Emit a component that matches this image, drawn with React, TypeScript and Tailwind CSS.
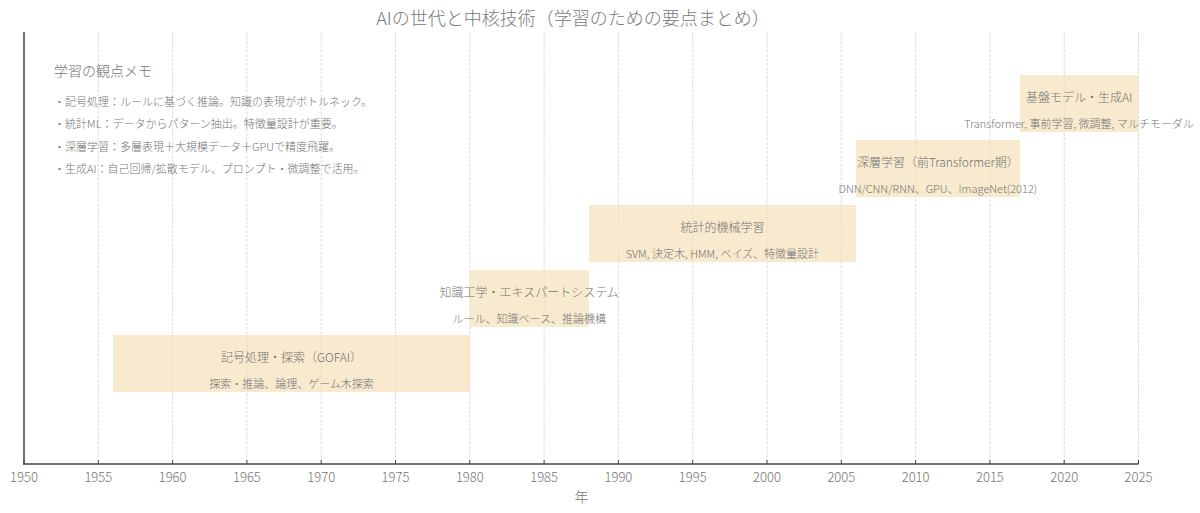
import React from "react";

const PX = 14.86; // pixels per year
const lx = (year: number) => (year - 1950) * PX;

type Era = { start: number; end: number; title: string; sub: string };

const eras: Era[] = [
  { start: 1956, end: 1980, title: "記号処理・探索（GOFAI）", sub: "探索・推論、論理、ゲーム木探索" },
  { start: 1980, end: 1988, title: "知識工学・エキスパートシステム", sub: "ルール、知識ベース、推論機構" },
  { start: 1988, end: 2006, title: "統計的機械学習", sub: "SVM, 決定木, HMM, ベイズ、特徴量設計" },
  { start: 2006, end: 2017, title: "深層学習（前Transformer期）", sub: "DNN/CNN/RNN、GPU、ImageNet(2012)" },
  { start: 2017, end: 2025, title: "基盤モデル・生成AI", sub: "Transformer, 事前学習, 微調整, マルチモーダル" },
];

const notes = [
  "・記号処理：ルールに基づく推論。知識の表現がボトルネック。",
  "・統計ML：データからパターン抽出。特徴量設計が重要。",
  "・深層学習：多層表現＋大規模データ＋GPUで精度飛躍。",
  "・生成AI：自己回帰/拡散モデル、プロンプト・微調整で活用。",
];

const ticks = Array.from({ length: 16 }, (_, i) => 1950 + i * 5);

export default function App() {
  return (
    <div className="w-[1200px] h-[513px] bg-white overflow-hidden flex flex-col font-['Noto_Sans_CJK_JP','Noto_Sans',sans-serif] font-light text-[#747474]">
      {/* Title */}
      <div className="h-[32px] w-[1146px] flex items-center justify-center pt-[2px]">
        <span className="text-[18px] leading-none text-[#7a7a7a]">
          AIの世代と中核技術（学習のための要点まとめ）
        </span>
      </div>

      {/* Plot area */}
      <div className="relative ml-[24px] w-[1115px] h-[432px]">
        <svg className="absolute inset-0 overflow-visible" width="1115" height="432">
          {ticks.slice(1).map((t) => (
            <line
              key={t}
              x1={lx(t)}
              x2={lx(t)}
              y1={0}
              y2={432}
              stroke="#d2d2d2"
              strokeWidth={0.8}
              strokeDasharray="3 1.4"
            />
          ))}
        </svg>

        {eras.map((e, i) => {
          const top = 303 - 65 * i;
          const center = top + 28.5;
          const cx = (lx(e.start) + lx(e.end)) / 2;
          return (
            <React.Fragment key={e.title}>
              <div
                className="absolute h-[57px] bg-[#f5deb3]/65"
                style={{ left: lx(e.start), width: lx(e.end) - lx(e.start), top }}
              />
              <div
                className="absolute -translate-x-1/2 -translate-y-1/2 whitespace-nowrap text-[12px] leading-none text-[#747474]"
                style={{ left: cx, top: center - 6.3 }}
              >
                {e.title}
              </div>
              <div
                className="absolute -translate-x-1/2 -translate-y-1/2 whitespace-nowrap text-[11px] leading-none text-[#747474]"
                style={{ left: cx, top: center + 19.7 }}
              >
                {e.sub}
              </div>
            </React.Fragment>
          );
        })}

        {/* Notes */}
        <div className="absolute left-[30px] top-[29px] flex flex-col">
          <div className="text-[14px] leading-[18px] text-[#747474] mb-[11px]">学習の観点メモ</div>
          <div className="flex flex-col">
            {notes.map((n) => (
              <div key={n} className="text-[11px] leading-[22.3px] whitespace-nowrap text-[#747474]">
                {n}
              </div>
            ))}
          </div>
        </div>

        <svg className="absolute inset-0 overflow-visible pointer-events-none" width="1115" height="432">
          {ticks.map((t) => (
            <line key={t} x1={lx(t)} x2={lx(t)} y1={428} y2={432} stroke="#444" strokeWidth={1} />
          ))}
          <line x1={0} x2={0} y1={0} y2={432.75} stroke="#444" strokeWidth={1.5} />
          <line x1={-0.75} x2={lx(2025)} y1={432} y2={432} stroke="#444" strokeWidth={1.5} />
        </svg>
      </div>

      {/* Tick labels */}
      <div className="relative ml-[24px] w-[1115px] h-[24px]">
        {ticks.map((t) => (
          <div
            key={t}
            className="absolute top-1/2 -translate-x-1/2 -translate-y-1/2 text-[13px] leading-none text-[#747474]"
            style={{ left: lx(t) }}
          >
            {t}
          </div>
        ))}
      </div>

      {/* X label */}
      <div className="ml-[24px] w-[1115px] h-[16px] flex items-center justify-center">
        <span className="text-[14px] leading-none text-[#747474]">年</span>
      </div>
    </div>
  );
}
